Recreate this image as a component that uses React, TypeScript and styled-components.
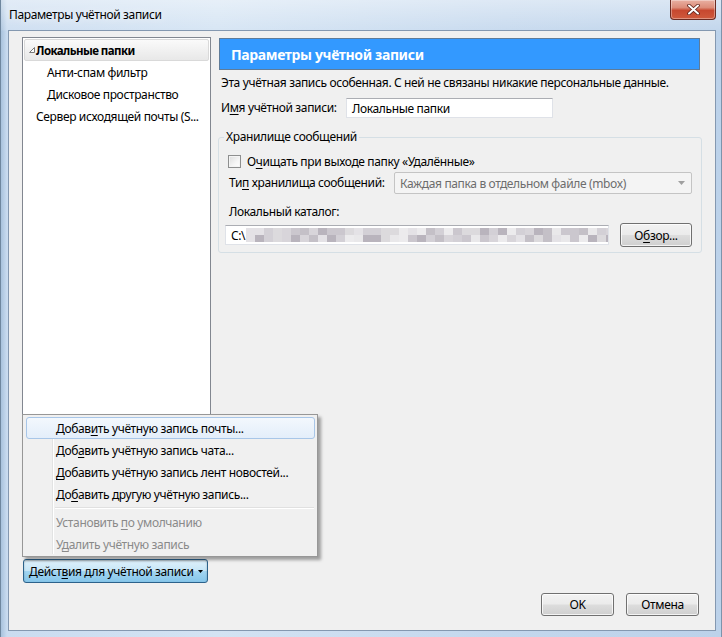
import React from "react";
import styled, { createGlobalStyle } from "styled-components";

const Global = createGlobalStyle`
  html, body { margin: 0; padding: 0; width: 722px; height: 637px; overflow: hidden; }
  body { font-family: "Noto Sans", "DejaVu Sans", sans-serif; font-size: 12px; letter-spacing: -0.36px; color: #000; background: #c6d9ee; }
  *, *::before, *::after { box-sizing: border-box; }
`;

const Window = styled.div`
  width: 722px;
  height: 637px;
  display: flex;
  flex-direction: column;
  padding: 0 6px 6px 7px;
  border-left: 1px solid #6f879f;
  border-right: 1px solid #7d93ab;
  background:
    linear-gradient(180deg, rgba(255,255,255,0.45) 0px, rgba(255,255,255,0.1) 30px, rgba(255,255,255,0) 31px),
    linear-gradient(90deg, #a8c2dd 0px, #cadcf0 6px, #d3e3f3 30%, #c3d7ed 70%, #bcd2ea 100%);
`;

const TitleBar = styled.div`
  height: 30px;
  flex: none;
  display: flex;
  justify-content: space-between;
  align-items: flex-start;
  margin-right: -1px;
`;

const TitleText = styled.div`
  padding: 7px 0 0 1px;
  line-height: 16px;
  font-size: 12px;
  color: #000;
  text-shadow: 0 0 8px rgba(255, 255, 255, 0.9);
`;

const CloseButton = styled.div`
  width: 46px;
  height: 20px;
  display: flex;
  align-items: center;
  justify-content: center;
  border: 1px solid #6b2b22;
  border-top: none;
  border-radius: 0 0 4px 4px;
  background: linear-gradient(180deg, #e9b0a2 0%, #dc8c79 40%, #c7482f 55%, #cf5a3d 100%);
  box-shadow: inset 0 0 0 1px rgba(255, 255, 255, 0.35);
`;

const Client = styled.div`
  flex: 1;
  display: flex;
  flex-direction: column;
  min-height: 0;
  margin-right: -1px;
  background: #f0f0f0;
  border: 1px solid #8498b0;
  padding: 6px 13px 14px 13px;
`;

const Main = styled.div`
  flex: 1;
  min-height: 0;
  display: grid;
  grid-template-columns: 189px 1fr;
  column-gap: 8px;
`;

const LeftCol = styled.div`
  position: relative;
  display: flex;
  flex-direction: column;
  min-height: 0;
`;

const Tree = styled.div`
  flex: 1;
  background: #fff;
  border: 1px solid #828790;
  padding: 1px;
`;

const TreeRow = styled.div<{ $indent: number; $selected?: boolean; $bold?: boolean }>`
  height: 22px;
  display: flex;
  align-items: center;
  padding-left: ${(p) => p.$indent - 2}px;
  border: 1px solid ${(p) => (p.$selected ? "#d9d9d9" : "transparent")};
  border-radius: 2px;
  background: ${(p) => (p.$selected ? "linear-gradient(180deg, #fafafa 0%, #e8e8e8 100%)" : "transparent")};
  font-weight: ${(p) => (p.$bold ? 700 : 400)};
  ${(p) => (p.$bold ? "font-size: 11.5px; letter-spacing: -0.55px;" : "")}
  white-space: nowrap;
`;

const Expander = styled.span`
  width: 8px;
  height: 22px;
  display: flex;
  align-items: center;
  flex: none;
  padding-left: 1px;
`;

const Key = styled.span`
  text-decoration: underline;
  text-underline-offset: 2px;
`;

const ActionButton = styled.div`
  margin-top: 7px;
  margin-left: 1px;
  width: 185px;
  height: 24px;
  display: flex;
  align-items: center;
  padding-left: 5px;
  gap: 5px;
  border: 1px solid #2c628b;
  border-radius: 3px;
  background: linear-gradient(180deg, #e0f1fb 0%, #c6e6f7 48%, #a2d5f1 52%, #86c6ea 100%);
  box-shadow: inset 0 1px 2px rgba(0, 0, 0, 0.25);
  white-space: nowrap;
`;

const Menu = styled.div`
  position: absolute;
  left: 0;
  bottom: 26px;
  width: 296px;
  height: 143px;
  background: #f0f0f0;
  border: 1px solid #979797;
  padding: 2px 2px 1px 3px;
  box-shadow: 3px 3px 3px rgba(0, 0, 0, 0.35);
  z-index: 2;
  &::before {
    content: "";
    position: absolute;
    left: 29px;
    top: 2px;
    bottom: 2px;
    width: 2px;
    border-left: 1px solid #e2e3e3;
    border-right: 1px solid #ffffff;
  }
`;

const MenuItem = styled.div<{ $active?: boolean; $disabled?: boolean }>`
  position: relative;
  height: 22px;
  display: flex;
  align-items: center;
  padding-left: 29px;
  border: 1px solid ${(p) => (p.$active ? "#a8c6e8" : "transparent")};
  border-radius: 3px;
  background: ${(p) => (p.$active ? "linear-gradient(180deg, #f3f8fd 0%, #e3eefa 100%)" : "transparent")};
  color: ${(p) => (p.$disabled ? "#8a8a8a" : "#000")};
  white-space: nowrap;
  z-index: 1;
`;

const MenuSeparator = styled.div`
  height: 6px;
  display: flex;
  align-items: center;
  padding-left: 29px;
  padding-right: 1px;
  &::after {
    content: "";
    flex: 1;
    height: 2px;
    border-top: 1px solid #e0e0e0;
    border-bottom: 1px solid #ffffff;
  }
`;

const RightCol = styled.div`
  display: flex;
  flex-direction: column;
  min-width: 0;
`;

const Header = styled.div`
  margin: 1px 2px 0 0;
  height: 32px;
  display: flex;
  align-items: center;
  padding-left: 11px;
  background: #3399ff;
  border: 1px solid #5f7c99;
  color: #fff;
  font-weight: 700;
  font-size: 14px;
`;

const Description = styled.div`
  margin-top: 5px;
  padding-left: 2px;
  line-height: 16px;
  white-space: nowrap;
`;

const NameRow = styled.div`
  margin-top: 7px;
  padding-left: 2px;
  height: 20px;
  display: flex;
  align-items: center;
`;

const Label = styled.span<{ $width?: number }>`
  flex: none;
  width: ${(p) => (p.$width ? `${p.$width}px` : "auto")};
  line-height: 16px;
  white-space: nowrap;
`;

const TextBox = styled.div<{ $width?: number }>`
  height: 20px;
  ${(p) => (p.$width ? `width: ${p.$width}px;` : "flex: 1;")}
  display: flex;
  align-items: center;
  padding-left: 5px;
  gap: 1px;
  background: #fff;
  border: 1px solid #dfe2e8;
  border-top-color: #abadb3;
  white-space: nowrap;
  overflow: hidden;
`;

const GroupBox = styled.fieldset`
  margin: 11px 0 0 -1px;
  padding: 8px 9px 5px 10px;
  border: 1px solid #d5dfe5;
  border-radius: 3px;
  min-width: 0;
`;

const Legend = styled.legend`
  margin-left: -5px;
  padding: 0 2px;
  line-height: 16px;
`;

const CheckRow = styled.div`
  height: 16px;
  display: flex;
  align-items: center;
  gap: 6px;
`;

const CheckBox = styled.span`
  width: 13px;
  height: 13px;
  flex: none;
  margin-left: -1px;
  border: 1px solid #8e8f8f;
  background: linear-gradient(135deg, #dcdcdc 0%, #f5f5f5 60%, #ffffff 100%);
  box-shadow: inset 0 0 0 1px #f4f4f4;
`;

const FieldRow = styled.div`
  margin-top: 3px;
  height: 22px;
  display: flex;
  align-items: center;
`;

const Select = styled.div`
  flex: 1;
  height: 22px;
  display: flex;
  align-items: center;
  justify-content: space-between;
  padding: 0 6px 0 5px;
  border: 1px solid #c4c4c4;
  border-radius: 2px;
  background: #f4f4f4;
  color: #6d6d6d;
  white-space: nowrap;
`;

const SubLabel = styled.div`
  margin-top: 10px;
  line-height: 16px;
`;

const PathRow = styled.div`
  margin: 3px 0 0 -4px;
  height: 24px;
  display: flex;
  align-items: center;
  gap: 11px;
`;

const PushButton = styled.div<{ $width: number; $height: number }>`
  width: ${(p) => p.$width}px;
  height: ${(p) => p.$height}px;
  flex: none;
  display: flex;
  align-items: center;
  justify-content: center;
  border: 1px solid #707070;
  border-radius: 3px;
  background: linear-gradient(180deg, #f2f2f2 0%, #ebebeb 48%, #dddddd 52%, #cfcfcf 100%);
  box-shadow: inset 0 0 0 1px rgba(255, 255, 255, 0.75);
  white-space: nowrap;
`;

const Footer = styled.div`
  margin-top: 10px;
  display: flex;
  justify-content: flex-end;
  gap: 12px;
  padding-right: 3px;
`;

const mosaicColors = ["#e4e2e6", "#d3d0d6", "#c4c0c7", "#dcdadd", "#ecebed", "#cbc7ce", "#b9b4bd", "#e9e8ea", "#d8d5da"];

const Mosaic: React.FC = () => {
  const cells: React.ReactNode[] = [];
  let seed = 7;
  for (let r = 0; r < 2; r++) {
    for (let c = 0; c < 41; c++) {
      seed = (seed * 1103515245 + 12345) % 2147483648;
      const color = mosaicColors[seed % mosaicColors.length];
      cells.push(<rect key={`${r}-${c}`} x={c * 9} y={r * 7} width={9} height={7} fill={color} />);
    }
  }
  return (
    <svg width="368" height="14" viewBox="0 0 368 14" style={{ flex: "none" }}>
      {cells}
    </svg>
  );
};

export default function App() {
  return (
    <>
      <Global />
      <Window>
        <TitleBar>
          <TitleText>Параметры учётной записи</TitleText>
          <CloseButton>
            <svg width="13" height="11" viewBox="0 0 13 11">
              <path d="M2 1.5 L11 9.5 M11 1.5 L2 9.5" stroke="#5a1f17" strokeWidth="3.6" strokeLinecap="round" />
              <path d="M2 1.5 L11 9.5 M11 1.5 L2 9.5" stroke="#ffffff" strokeWidth="2" strokeLinecap="round" />
            </svg>
          </CloseButton>
        </TitleBar>
        <Client>
          <Main>
            <LeftCol>
              <Tree>
                <TreeRow $indent={5} $selected $bold>
                  <Expander>
                    <svg width="6" height="6" viewBox="0 0 6 6">
                      <path d="M5.5 0.5 L5.5 5.5 L0.5 5.5 Z" fill="#fff" stroke="#7a7a7a" strokeWidth="1" />
                    </svg>
                  </Expander>
                  <span>Локальные папки</span>
                </TreeRow>
                <TreeRow $indent={24}>Анти-спам фильтр</TreeRow>
                <TreeRow $indent={24}>Дисковое пространство</TreeRow>
                <TreeRow $indent={13}>Сервер исходящей почты (S...</TreeRow>
              </Tree>
              <ActionButton>
                <span>
                  Дейст<Key>в</Key>ия для учётной записи
                </span>
                <svg width="5" height="3" viewBox="0 0 5 3">
                  <path d="M0 0 L5 0 L2.5 3 Z" fill="#000" />
                </svg>
              </ActionButton>
              <Menu>
                <MenuItem $active>
                  <span>
                    Добав<Key>и</Key>ть учётную запись почты...
                  </span>
                </MenuItem>
                <MenuItem>
                  <span>
                    Доб<Key>а</Key>вить учётную запись чата...
                  </span>
                </MenuItem>
                <MenuItem>
                  <span>
                    <Key>Д</Key>обавить учётную запись лент новостей...
                  </span>
                </MenuItem>
                <MenuItem>
                  <span>
                    До<Key>б</Key>авить другую учётную запись...
                  </span>
                </MenuItem>
                <MenuSeparator />
                <MenuItem $disabled>
                  <span>
                    Установить <Key>п</Key>о умолчанию
                  </span>
                </MenuItem>
                <MenuItem $disabled>
                  <span>
                    У<Key>д</Key>алить учётную запись
                  </span>
                </MenuItem>
              </Menu>
            </LeftCol>
            <RightCol>
              <Header>Параметры учётной записи</Header>
              <Description>Эта учётная запись особенная. С ней не связаны никакие персональные данные.</Description>
              <NameRow>
                <Label $width={125}>
                  И<Key>м</Key>я учётной записи:
                </Label>
                <TextBox $width={207}>Локальные папки</TextBox>
              </NameRow>
              <GroupBox>
                <Legend>Хранилище сообщений</Legend>
                <CheckRow>
                  <CheckBox />
                  <span>
                    О<Key>ч</Key>ищать при выходе папку «Удалённые»
                  </span>
                </CheckRow>
                <FieldRow>
                  <Label $width={165}>
                    Ти<Key>п</Key> хранилища сообщений:
                  </Label>
                  <Select>
                    <span>Каждая папка в отдельном файле (mbox)</span>
                    <svg width="7" height="4" viewBox="0 0 7 4">
                      <path d="M0 0 L7 0 L3.5 4 Z" fill="#a0a0a0" />
                    </svg>
                  </Select>
                </FieldRow>
                <SubLabel>Локальный каталог:</SubLabel>
                <PathRow>
                  <TextBox>
                    <span>C:\</span>
                    <Mosaic />
                  </TextBox>
                  <PushButton $width={72} $height={24}>
                    <span>
                      О<Key>б</Key>зор...
                    </span>
                  </PushButton>
                </PathRow>
              </GroupBox>
            </RightCol>
          </Main>
          <Footer>
            <PushButton $width={73} $height={23}>OK</PushButton>
            <PushButton $width={73} $height={23}>Отмена</PushButton>
          </Footer>
        </Client>
      </Window>
    </>
  );
}
